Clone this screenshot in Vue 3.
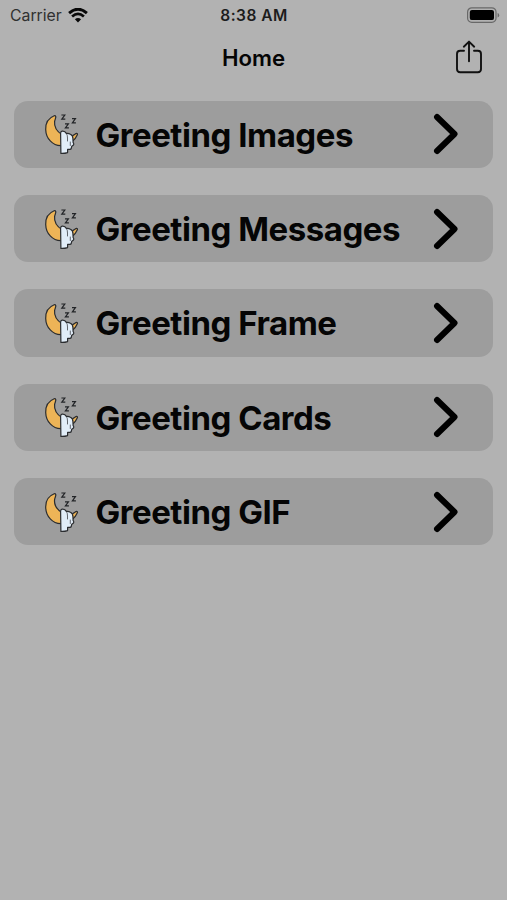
<script setup>
import {ref} from "vue";

const title = ref('Home')
const menuItems = ref([
  'Greeting Images',
  'Greeting Messages',
  'Greeting Frame',
  'Greeting Cards',
  'Greeting GIF'
])
</script>
<template>
  <div class="home-page">
    <div class="status-bar">
      <div class="status-carrier">
        <span>Carrier</span>
        <svg class="wifi-icon" viewBox="0 0 20 15">
          <path d="M1.1 5.1 Q10 -2.7 18.9 5.1" fill="none" stroke="#080808" stroke-width="2.9"/>
          <path d="M4.1 8.5 Q10 3.3 15.9 8.5" fill="none" stroke="#080808" stroke-width="2.7"/>
          <path d="M6.9 11.3 Q10 8.5 13.1 11.3 L10 14.5 Z" fill="#080808"/>
        </svg>
      </div>
      <span class="status-time">8:38 AM</span>
      <div class="status-battery">
        <svg class="battery-icon" viewBox="0 0 34 17">
          <rect x="1.6" y=".8" width="28.4" height="14.6" rx="4.2" fill="none" stroke="#686868" stroke-width="1.2"/>
          <rect x="3.8" y="2.9" width="24.2" height="10.2" rx="2.2" fill="#000"/>
          <path d="M31.6 6 Q33.2 6.6 33.2 8.3 Q33.2 10 31.6 10.6 Z" fill="#686868"/>
        </svg>
      </div>
    </div>
    <div class="nav-bar">
      <h1>{{ title }}</h1>
      <button class="share-button" aria-label="Share">
        <svg viewBox="0 0 28 34">
          <g fill="none" stroke="#111" stroke-width="1.9" stroke-linecap="round" stroke-linejoin="round">
            <path d="M9 10.8 H5.2 Q2 10.8 2 14 V29 Q2 32.2 5.2 32.2 H22.8 Q26 32.2 26 29 V14 Q26 10.8 22.8 10.8 H19"/>
            <path d="M14 21.3 V2 M8.8 6.7 L14 1.6 L19.2 6.7"/>
          </g>
        </svg>
      </button>
    </div>
    <div class="menu-list">
      <div v-for="item in menuItems" :key="item" class="menu-item">
        <svg class="moon-icon" viewBox="0 0 40 46">
          <g stroke="#2b2d30" stroke-width="1.2" stroke-linejoin="round" stroke-linecap="round">
            <path d="M12.2 4.8 C6.6 7 3.5 12 3.7 18.4 C3.9 27.5 10.6 34.4 18.8 34.7 C26.5 34.8 33.2 29.6 35.5 23.5 C35.6 22 34.2 22 33.2 23 C30 26 24.5 26.6 20.4 24 C15 20.6 12 15.6 12.6 10.6 C12.8 8.8 14 7 13.8 5.7 Q13.3 4.4 12.2 4.8 Z" fill="#edb457"/>
            <path d="M18.6 22.2 Q18.8 19.7 21 20.1 Q23 20.3 24.4 22.4 Q26.5 22 28.4 23.3 Q31 24.6 30.9 27.4 L31.1 31.4 Q32.6 33.6 30.6 34.6 Q29.4 35 29.4 37 Q29 38.7 27.4 38.4 L25.6 38.4 V41.6 Q22.5 42.6 18.9 42.4 Z" fill="#e1edf8"/>
            <path d="M24.4 22.4 Q25.6 24 25.5 27 V30 M28.3 31 V34.5" fill="none" stroke-width=".7"/>
          </g>
          <g fill="none" stroke="#222427" stroke-width="1.2">
            <path d="M19.4 4 H22.8 L19.8 8.1 H23.3"/>
            <path d="M30 7.7 H33.4 L30.4 11.8 H33.9"/>
            <path d="M23 12.8 H26.4 L23.4 16.9 H26.9"/>
          </g>
        </svg>
        <span class="menu-label">{{ item }}</span>
        <svg class="chevron-icon" viewBox="0 0 28 42">
          <path d="M4 4 L21.5 21 L4 38" fill="none" stroke="#000" stroke-width="6" stroke-linecap="round" stroke-linejoin="round"/>
        </svg>
      </div>
    </div>
  </div>
</template>
<style>
body {
  background: #b2b2b2;
}
</style>
<style scoped>
.home-page {
  width: 100%;
  height: 100vh;
  overflow: hidden;
  background: #b2b2b2;
  font-family: Inter, "Liberation Sans", sans-serif;
  color: #050505;
}

.status-bar {
  height: 30px;
  padding: 0 7px 0 10px;
  box-sizing: border-box;
  display: grid;
  grid-template-columns: 1fr auto 1fr;
  align-items: center;
}

.status-carrier {
  display: flex;
  align-items: center;
  gap: 6px;
  font-size: 15.8px;
  color: #303030;
}

.wifi-icon {
  width: 20px;
  height: 15px;
}

.status-time {
  margin-right: 2px;
  font-size: 15.5px;
  font-weight: 600;
  letter-spacing: 0.45px;
  color: #1c1c1c;
}

.status-battery {
  display: flex;
  justify-content: flex-end;
}

.battery-icon {
  width: 34px;
  height: 17px;
}

.nav-bar {
  height: 70.7px;
  padding: 0 24px;
  box-sizing: border-box;
  display: grid;
  grid-template-columns: 1fr auto 1fr;
}

.nav-bar h1 {
  grid-column: 2;
  margin: 0;
  padding-top: 14px;
  font-size: 22.2px;
  line-height: 28px;
  font-weight: 600;
}

.share-button {
  width: 28px;
  height: 34px;
  margin-top: 10px;
  padding: 0;
  border: 0;
  background: transparent;
  justify-self: end;
}

.share-button svg {
  display: block;
  width: 28px;
  height: 34px;
}

.menu-list {
  display: flex;
  flex-direction: column;
  gap: 27px;
  padding: 0 14px;
}

.menu-item {
  height: 67.3px;
  padding: 0 32px 0 28px;
  box-sizing: border-box;
  display: flex;
  align-items: center;
  border-radius: 14px;
  background: #9d9d9d;
}

.moon-icon {
  width: 40px;
  height: 46px;
  flex-shrink: 0;
}

.menu-label {
  margin-left: 13.5px;
  padding-top: 1px;
  flex: 1;
  font-size: 33px;
  line-height: 40px;
  font-weight: 700;
  letter-spacing: -0.47px;
  white-space: nowrap;
}

.chevron-icon {
  width: 28px;
  height: 42px;
  flex-shrink: 0;
}
</style>
